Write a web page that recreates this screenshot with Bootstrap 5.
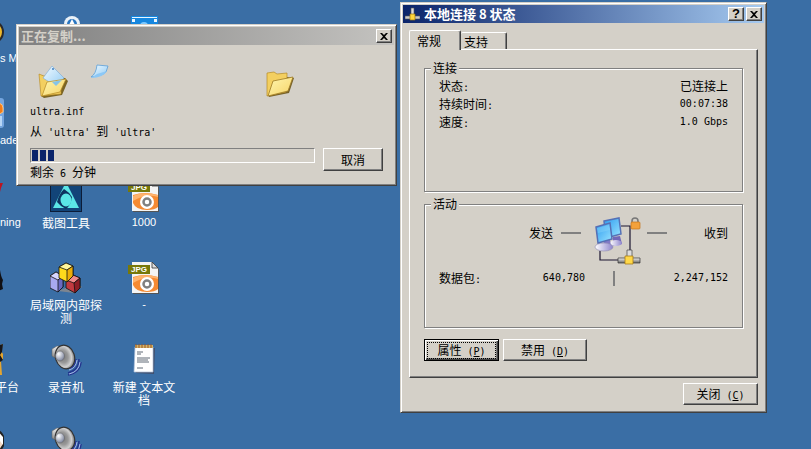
<!DOCTYPE html>
<html lang="zh-CN">
<head>
<meta charset="utf-8">
<meta name="viewport" content="width=device-width, initial-scale=1">
<title>桌面</title>
<link href="https://cdn.jsdelivr.net/npm/bootstrap@5.3.0/dist/css/bootstrap.min.css" rel="stylesheet">
<style>
  :root { --face: #d4d0c8; --shade: #808080; --dark: #404040; --desk: #3a6ea5; }
  body { font: 12px/18px "Noto Sans CJK SC", sans-serif; color: #000; background: var(--desk); }
  .desktop { background: var(--desk); }
  .mono { font-family: "DejaVu Sans Mono", "Noto Sans CJK SC", monospace; font-size: 10px; line-height: 12px; white-space: pre; }

  .shortcuts { display: grid; grid-auto-flow: column; grid-template-rows: repeat(6, 82px); grid-auto-columns: 78px; margin-left: -51px; padding-top: 16px; }
  .shortcut { color: #fff; line-height: 13px; gap: 4px; }
  .shortcut:hover { color: #fff; }
  .shortcut svg { width: 32px; height: 32px; flex: none; }
  .shortcut .caption-text { width: 74px; }
  .latin { font-family: "Liberation Sans", sans-serif; font-size: 11px; }
  .shortcut.edge .caption-text { width: 78px; padding-left: 51px; text-align: left; white-space: nowrap; }
  .shortcut.edge .ends { padding: 0 8px 0 0; text-align: right; }

  .win { background: var(--face); border: 1px solid; border-color: var(--face) var(--dark) var(--dark) var(--face); box-shadow: inset 1px 1px #fff, inset -1px -1px var(--shade); padding: 2px; }
  .win-copy { left: 16px; top: 24px; width: 381px; }
  .win-status { left: 400px; top: 2px; width: 367px; }
  .titlebar { height: 18px; padding: 0 2px; font-size: 13px; font-weight: 700; line-height: 18px; }
  .titlebar.idle { background: linear-gradient(90deg, #808080, #c4c3c0); color: var(--face); }
  .titlebar.live { background: linear-gradient(90deg, #0a246a, #a6caf0); color: #fff; }

  .key { background: var(--face); color: #000; border: 1px solid; border-color: #fff var(--dark) var(--dark) #fff; box-shadow: inset -1px -1px var(--shade); border-radius: 0; padding: 0; font-size: 12px; line-height: 18px; }
  .key-cap { width: 16px; height: 14px; display: flex; align-items: center; justify-content: center; }
  .key-cap + .key-cap { margin-left: 2px; }
  .key-cap .latin { font-size: 13px; line-height: 12px; }
  .key-lg { height: 23px; width: 60px; }
  .key-md { height: 22px; width: 75px; }
  .key-xl { height: 22px; width: 84px; }
  .key-default { border-color: #000; box-shadow: inset 1px 1px #fff, inset -1px -1px var(--dark), inset -2px -2px var(--shade); padding: 2px; }
  .key-default > span { display: block; outline: 1px dotted #000; line-height: 14px; margin: 0 1px; }

  .copy-body { padding: 18px 11px 2px; }
  .copy-name { line-height: 20px; }
  .flight { height: 39px; padding-left: 8px; gap: 20px; }
  .progress { --bs-progress-height: 15px; --bs-progress-bg: transparent; --bs-progress-border-radius: 0; border: 1px solid; border-color: var(--shade) #fff #fff var(--shade); padding: 1px; border-radius: 0; }
  .progress-bar { background: repeating-linear-gradient(90deg, #0a246a 0 6px, var(--face) 6px 8px); }

  .status-body { padding: 7px 6px 5px; }
  .tabs { height: 19px; }
  .tab { background: var(--face); border: 0; border-top: 1px solid #fff; border-left: 1px solid #fff; border-right: 1px solid var(--dark); box-shadow: inset -1px 0 var(--shade); border-radius: 2px 2px 0 0; line-height: 18px; color: #000; text-align: left; }
  .tab.on { width: 52px; height: 20px; padding: 0 7px; position: relative; z-index: 1; }
  .tab.off { width: 46px; height: 17px; padding: 0 3px; border-left: 0; }
  .sheet { border: 1px solid; border-color: #fff var(--dark) var(--dark) #fff; box-shadow: inset -1px -1px var(--shade); padding: 11px 14px 16px; }
  .group { border: 1px solid var(--shade); box-shadow: inset 1px 1px #fff, 1px 1px #fff; padding: 2px 14px 0; }
  .group legend { float: none; width: auto; font-size: 12px; line-height: 14px; height: 14px; margin: 0 0 0 -8px; padding: 0 2px; background: var(--face); }
  .group-conn { height: 131px; margin-bottom: 5px; }
  .group-act { height: 131px; margin-bottom: 11px; }
  .traffic { display: grid; grid-template-columns: 1fr 58px 85px; row-gap: 2px; align-items: center; }
  .way { align-self: start; padding-top: 11px; }
  .rule { width: 20px; height: 2px; background: var(--shade); }
  .divider { width: 2px; height: 15px; background: var(--shade); }
  .closing { padding-top: 5px; }
</style>
</head>
<body>
<svg class="position-absolute" width="0" height="0" aria-hidden="true">
  <defs>
    <linearGradient id="gold" x1="0" y1="0" x2="1" y2="1"><stop offset="0" stop-color="#fff6b0"/><stop offset="1" stop-color="#f6d468"/></linearGradient>
    <linearGradient id="sky" x1="0" y1="0" x2="1" y2="1"><stop offset="0" stop-color="#f4fbff"/><stop offset="1" stop-color="#8fcaf4"/></linearGradient>
    <linearGradient id="screen" x1="0" y1="0" x2="1" y2="1"><stop offset="0" stop-color="#2b9bf0"/><stop offset="1" stop-color="#9be4ff"/></linearGradient>
    <linearGradient id="lilac" x1="0" y1="0" x2="1" y2="0"><stop offset="0" stop-color="#fff"/><stop offset="1" stop-color="#8d84cc"/></linearGradient>
    <linearGradient id="steel" x1="0" y1="0" x2="0" y2="1"><stop offset="0" stop-color="#f2f2f2"/><stop offset="1" stop-color="#666"/></linearGradient>
    <radialGradient id="cone" cx=".4" cy=".45" r=".6"><stop offset="0" stop-color="#777"/><stop offset=".45" stop-color="#999"/><stop offset=".75" stop-color="#d0d0d0"/><stop offset="1" stop-color="#777"/></radialGradient>
    <radialGradient id="dome" cx=".35" cy=".3" r=".7"><stop offset="0" stop-color="#fff"/><stop offset="1" stop-color="#8088a0"/></radialGradient>
    <symbol id="i-jpg" viewBox="0 0 32 32">
      <path d="M5 1h20l6 6v25H5z" fill="#555"/><path d="M4 0h20l6 6v25H4z" fill="#f4f4f4"/><path d="M24 0v6h6z" fill="#ddd" stroke="#333" stroke-width=".8"/>
      <path d="M5 15q12-4 25 0v12q-3 3-11 3Q8 30 5 23z" fill="#f58a32"/><path d="M5 16q9-5 25-1v2q-12-4-25 4z" fill="#ffb36d"/>
      <circle cx="19" cy="22" r="7" fill="#fff"/><circle cx="19" cy="22" r="3.5" fill="none" stroke="#808080" stroke-width="2.5"/>
      <path d="M0 3h22v9H0z" fill="#777809"/><text x="3" y="10" font-family="Liberation Sans" font-size="8" font-weight="700" fill="#fff">JPG</text>
    </symbol>
    <symbol id="i-speaker" viewBox="0 0 32 32">
      <path d="M2 5l5-3 7 1v14l-7-2-5-3z" fill="url(#steel)" stroke="#666" stroke-width=".6"/>
      <ellipse cx="15" cy="13" rx="9.5" ry="12" transform="rotate(-18 15 13)" fill="url(#cone)" stroke="#333" stroke-width="1.200"/>
      <ellipse cx="10" cy="12" rx="4.500" ry="5" fill="url(#dome)" stroke="#666" stroke-width=".6"/>
      <path d="M20 25q6-3 6-10M18 29q11-3 11-14M18 31q12-2 13-13" fill="none" stroke="#23358e" stroke-width="1.500"/>
      <path d="M19 26q7-2 8-10M19 30q10-2 11-12" fill="none" stroke="#b5c4f4" stroke-width=".9"/>
    </symbol>
  </defs>
</svg>

<main class="desktop position-relative vh-100 overflow-hidden">
  <nav class="shortcuts" aria-label="桌面图标">
    <a href="#" class="shortcut edge d-flex flex-column align-items-center text-decoration-none">
      <svg viewBox="0 0 32 32"><circle cx="20" cy="16" r="11" fill="#edb92c" stroke="#29292c" stroke-width="2"/></svg><span class="caption-text latin">s MX</span></a>
    <a href="#" class="shortcut edge d-flex flex-column align-items-center text-decoration-none">
      <svg viewBox="0 0 32 32"><rect width="32" height="30" rx="3" fill="#74a5df"/><path d="M12 5h15q4 1 4 5v4l-7 4H12z" fill="#f37c16" stroke="#ffc27b"/><path d="M27 18h3v10h-3z" fill="#b7d6f6"/></svg><span class="caption-text latin">ader</span></a>
    <a href="#" class="shortcut edge d-flex flex-column align-items-center text-decoration-none">
      <svg viewBox="0 0 32 32"><path d="M15 3h16l-2 5-2 8H15z" fill="#bd1420"/></svg><span class="caption-text latin">ning</span></a>
    <a href="#" class="shortcut edge d-flex flex-column align-items-center text-decoration-none" aria-label="程序">
      <svg viewBox="0 0 32 32"><path d="M20 5l8 3q1 7 3 10l-1 4 1 5-5 2z" fill="#101014"/></svg></a>
    <a href="#" class="shortcut edge d-flex flex-column align-items-center text-decoration-none">
      <svg viewBox="0 0 32 32"><path d="M22 4l9-4-2 7 2 3v5l-2 2 1 14h-8z" fill="#e4a530"/><path d="M25 2l6-2-1 8-2 3 3 5-3 2V9z" fill="#17171a"/></svg><span class="caption-text ends">平台</span></a>
    <a href="#" class="shortcut edge d-flex flex-column align-items-center text-decoration-none" aria-label="程序">
      <svg viewBox="0 0 32 32"><circle cx="20" cy="15" r="12" fill="#f4d9c4" stroke="#222" stroke-width="2"/><path d="M28 8l3 3v8l-3-4z" fill="#fff"/></svg></a>

    <a href="#" class="shortcut d-flex flex-column align-items-center text-center text-decoration-none" aria-label="程序">
      <svg viewBox="0 0 32 32"><circle cx="22" cy="8" r="8" fill="#e9f1f8"/><circle cx="22" cy="8" r="5" fill="#2a76c0"/><path d="M22 3l3 6h-6z" fill="#fff"/></svg></a>
    <a href="#" class="shortcut" aria-label="程序"></a>
    <a href="#" class="shortcut d-flex flex-column align-items-center text-center text-decoration-none">
      <svg viewBox="0 0 32 32"><path d="M0 0h32v32H0z" fill="#0c1c38"/><path d="M1 1h30v30H1z" fill="#124478"/><path d="M16 2l13 26H3z" fill="#5be6e6"/><path d="M14 9q5 3 8 8-1 8-6 12-6-3-9-7 2-8 7-13z" fill="#0e3360"/><ellipse cx="16" cy="20" rx="5.500" ry="6.500" fill="#5be6e6"/></svg><span class="caption-text">截图工具</span></a>
    <a href="#" class="shortcut d-flex flex-column align-items-center text-center text-decoration-none">
      <svg viewBox="0 0 32 32"><path d="M8 29l10-4 10-3 4 3-8 6z" fill="#7d8590"/>
        <g stroke="#111" stroke-width=".8" stroke-linejoin="round"><path d="M0 14l6-4 7 4v11l-5 5-8-4z" fill="#a9a9ef"/><path d="M0 14l6-4 7 4-5 4z" fill="#d6d6ff"/><path d="M8 18l5-4v11l-5 5z" fill="#6a6abf"/>
        <path d="M16 18l7-5 7 3v10l-5 5-9-5z" fill="#c23a40"/><path d="M16 18l7-5 7 3-6 5z" fill="#f08888"/><path d="M24 21l6-5v10l-5 5z" fill="#8e1d25"/>
        <path d="M9 5l7-4 7 3v10l-6 6-8-4z" fill="#ffd91c"/><path d="M9 5l7-4 7 3-6 4z" fill="#fff69b"/><path d="M17 8l6-4v10l-6 6z" fill="#edae08"/></g></svg><span class="caption-text">局域网内部探测</span></a>
    <a href="#" class="shortcut d-flex flex-column align-items-center text-center text-decoration-none">
      <svg><use href="#i-speaker"/></svg><span class="caption-text">录音机</span></a>
    <a href="#" class="shortcut d-flex flex-column align-items-center text-center text-decoration-none" aria-label="声音">
      <svg><use href="#i-speaker"/></svg></a>

    <a href="#" class="shortcut d-flex flex-column align-items-center text-center text-decoration-none" aria-label="视频">
      <svg viewBox="0 0 32 32"><path d="M3 0h27v24H3z" fill="#1687df"/><path d="M4 1h25v1H4zM4 3h3v3H4zM26 3h3v3h-3z" fill="#e9f6ff"/><circle cx="16" cy="10" r="4" fill="#7cc9ff"/></svg></a>
    <a href="#" class="shortcut" aria-label="图片"></a>
    <a href="#" class="shortcut d-flex flex-column align-items-center text-center text-decoration-none">
      <svg><use href="#i-jpg"/></svg><span class="caption-text latin">1000</span></a>
    <a href="#" class="shortcut d-flex flex-column align-items-center text-center text-decoration-none">
      <svg><use href="#i-jpg"/></svg><span class="caption-text latin">-</span></a>
    <a href="#" class="shortcut d-flex flex-column align-items-center text-center text-decoration-none">
      <svg viewBox="0 0 32 32"><path d="M8 4h19l-1 26-18-1z" fill="#42506d"/><path d="M7 3h18v25H6z" fill="#fff" stroke="#aebfd9" stroke-width=".7"/><path d="M7 1h18v3H7z" fill="#d2b36a"/><path d="M8 0v4M11 0v4M14 0v4M17 0v4M20 0v4M23 0v4" stroke="#9c5723"/><path d="M9 8h6M9 10h4M9 14h13M9 16h11M9 18h12M9 24h6" stroke="#4f5966" stroke-width=".9"/></svg><span class="caption-text">新建 文本文档</span></a>
  </nav>

  <section class="win win-copy position-absolute" aria-labelledby="copy-title">
    <header class="titlebar idle d-flex align-items-center">
      <span id="copy-title" class="me-auto">正在复制...</span>
      <button type="button" class="key key-cap" aria-label="关闭"><svg width="8" height="7" viewBox="0 0 8 7"><path d="M0 0h2l2 2 2-2h2L5 3.500l3 3.500H6L4 5 2 7H0l3-3.500z"/></svg></button>
    </header>
    <div class="copy-body">
      <div class="flight d-flex align-items-start">
        <svg width="32" height="36" viewBox="0 0 32 36"><path d="M3 12l5 2 19 1 3 3-6 14-18 3-3-2z" fill="#7a6425"/><path d="M1 11l5 2 3-1 14 2v17L3 33z" fill="#f3cf60" stroke="#b38620" stroke-width=".6"/><path d="M14 3l12 12-7 9-14-9z" fill="url(#sky)" stroke="#7aa8d4" stroke-width=".6"/><circle cx="15" cy="6" r="1" fill="#3f7fc0"/><path d="M9 19l19-3-6 13-18 4z" fill="url(#gold)" stroke="#b38620" stroke-width=".7"/><path d="M14 19l10-2-6 6z" fill="#86c4e8"/></svg>
        <svg width="20" height="18" viewBox="0 0 20 18"><path d="M7 2l11 1-2 6q-4 4-15 5 5-3 6-12z" fill="url(#sky)" stroke="#5a9ed8" stroke-width=".8"/><path d="M1 15l6-4 10-3q-4 7-16 7z" fill="#8cc8f6"/></svg>
        <svg class="ms-auto" width="117" height="36" viewBox="0 0 117 36"><path d="M4 12l10 1 14 2-5 15-20 4z" fill="#77622a"/><path d="M1 10l7-1 3 2 10-1v4l-1 15L1 33z" fill="#f3cf60" stroke="#b68b25" stroke-width=".7"/><path d="M7 18l20-4-5 14-20 5z" fill="url(#gold)" stroke="#9d7a25" stroke-width=".8"/></svg>
      </div>
      <div class="mono copy-name">ultra.inf</div>
      <div>从<span class="mono"> 'ultra' </span>到<span class="mono"> 'ultra'</span></div>
      <div class="d-flex align-items-start mt-2">
        <div class="flex-grow-1 me-2">
          <div class="progress" role="progressbar" aria-label="复制进度" aria-valuenow="9" aria-valuemin="0" aria-valuemax="100"><div class="progress-bar" style="width: 8.500%"></div></div>
          <div>剩余<span class="mono"> 6 </span>分钟</div>
        </div>
        <button type="button" class="key key-lg">取消</button>
      </div>
    </div>
  </section>

  <section class="win win-status position-absolute" aria-labelledby="status-title">
    <header class="titlebar live d-flex align-items-center">
      <svg class="me-1" width="15" height="14" viewBox="0 0 15 14"><path d="M6 1h3v7H6z" fill="#ddd" stroke="#555" stroke-width=".6"/><path d="M0 9h15v3H0z" fill="#c9c9c9" stroke="#555" stroke-width=".6"/><path d="M5 7h5v6H5z" fill="#ffd63c" stroke="#9a7410" stroke-width=".7"/></svg>
      <span id="status-title" class="me-auto">本地连接 8 状态</span>
      <button type="button" class="key key-cap fw-bold" aria-label="帮助"><span class="latin">?</span></button>
      <button type="button" class="key key-cap" aria-label="关闭"><svg width="8" height="7" viewBox="0 0 8 7"><path d="M0 0h2l2 2 2-2h2L5 3.500l3 3.500H6L4 5 2 7H0l3-3.500z"/></svg></button>
    </header>
    <div class="status-body">
      <div class="tabs d-flex align-items-end" role="tablist">
        <button type="button" class="tab on align-self-start" role="tab" aria-selected="true">常规</button>
        <button type="button" class="tab off" role="tab" aria-selected="false">支持</button>
      </div>
      <div class="sheet" role="tabpanel">
        <fieldset class="group group-conn">
          <legend>连接</legend>
          <div class="d-flex justify-content-between align-items-center"><span>状态<span class="mono">:</span></span><span>已连接上</span></div>
          <div class="d-flex justify-content-between align-items-center"><span>持续时间<span class="mono">:</span></span><span class="mono">00:07:38</span></div>
          <div class="d-flex justify-content-between align-items-center"><span>速度<span class="mono">:</span></span><span class="mono">1.0 Gbps</span></div>
        </fieldset>
        <fieldset class="group group-act">
          <legend>活动</legend>
          <div class="traffic">
            <div class="way d-flex justify-content-end align-items-center gap-2 pe-1"><span>发送</span><span class="rule"></span></div>
            <svg class="ms-auto mt-1" width="50" height="50" viewBox="0 0 50 50">
              <path d="M28 9h9v26M7 34v9h20" fill="none" stroke="#1a1430" stroke-width="1.200"/>
              <path d="M20 20l7-1 2 8-9 2z" fill="#7268b8"/><ellipse cx="23" cy="26" rx="6" ry="3" fill="url(#lilac)"/>
              <path d="M11 4l15-3 2 16-15 4z" fill="url(#screen)" stroke="#5571b6" stroke-width="1.500"/>
              <path d="M11 23l6-1 1 8-8 1z" fill="#8279c6"/><ellipse cx="11" cy="30" rx="9" ry="4" fill="url(#lilac)" stroke="#8d8ab0" stroke-width=".6"/>
              <path d="M3 10l14-4 2 16-14 4z" fill="url(#screen)" stroke="#566fb4" stroke-width="1.500"/><path d="M4 11l12-3 1 5-12 3z" fill="#8ed6fa" opacity=".4"/>
              <path d="M39 6V4q0-3 3-3t3 3v2" fill="none" stroke="#777" stroke-width="1.500"/><rect x="38" y="5" width="9" height="7" rx="1" fill="#f3a13b" stroke="#c47418" stroke-width=".7"/>
              <path d="M34 33h5v7h-5z" fill="#ddd" stroke="#444" stroke-width=".7"/><path d="M25 41h22v5H25z" fill="url(#steel)" stroke="#333" stroke-width=".7"/><path d="M32 39h8v8h-8z" fill="#ffd849" stroke="#a77b16" stroke-width=".8"/>
            </svg>
            <div class="way d-flex justify-content-between align-items-center ps-1"><span class="rule"></span><span>收到</span></div>
            <div class="d-flex justify-content-between align-items-center"><span>数据包<span class="mono">:</span></span><span class="mono">640,780</span></div>
            <span class="divider mx-auto"></span>
            <span class="mono text-end">2,247,152</span>
          </div>
        </fieldset>
        <div class="d-flex gap-1">
          <button type="button" class="key key-md key-default"><span>属性<span class="mono"> (<u>P</u>)</span></span></button>
          <button type="button" class="key key-xl">禁用<span class="mono"> (<u>D</u>)</span></button>
        </div>
      </div>
      <div class="closing d-flex justify-content-end"><button type="button" class="key key-md">关闭<span class="mono"> (<u>C</u>)</span></button></div>
    </div>
  </section>
</main>
<script src="https://cdn.jsdelivr.net/npm/bootstrap@5.3.0/dist/js/bootstrap.bundle.min.js"></script>
</body>
</html>
